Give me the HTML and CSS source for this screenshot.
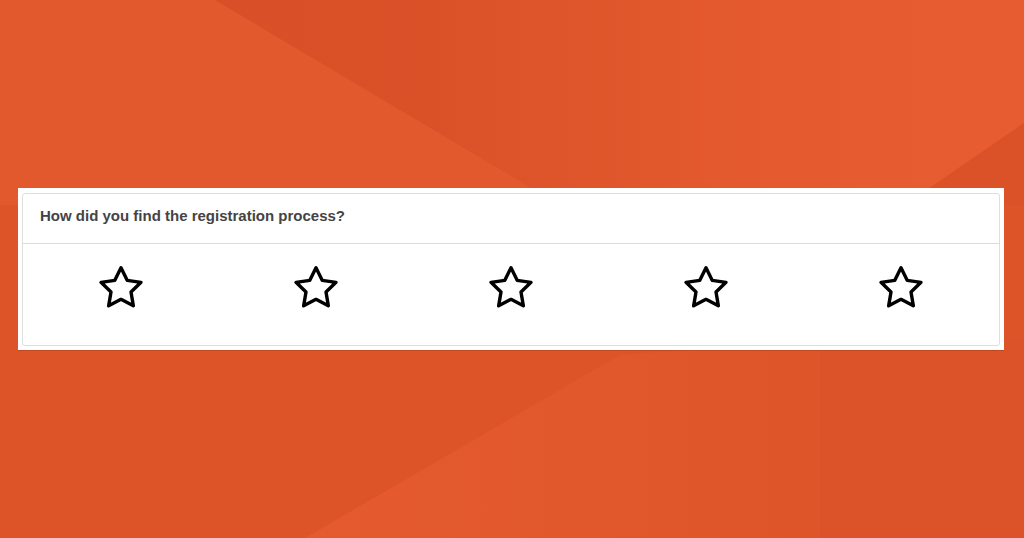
FILE: index.html
```html
<!DOCTYPE html>
<html lang="en">
<head>
<meta charset="utf-8">
<title>Rating</title>
<link rel="stylesheet" href="styles.css">
</head>
<body>
<div class="backdrop" aria-hidden="true">
  <svg viewBox="0 0 1024 538" preserveAspectRatio="none" width="1024" height="538">
    <defs>
      <linearGradient id="topDark" x1="215" y1="0" x2="1024" y2="0" gradientUnits="userSpaceOnUse">
        <stop offset="0" stop-color="#d94f27"/>
        <stop offset="0.25" stop-color="#da5128"/>
        <stop offset="0.55" stop-color="#e2582d"/>
        <stop offset="0.8" stop-color="#e75b30"/>
        <stop offset="1" stop-color="#e85c31"/>
      </linearGradient>
      <linearGradient id="botLight" x1="300" y1="0" x2="800" y2="0" gradientUnits="userSpaceOnUse">
        <stop offset="0" stop-color="#e55a2f"/>
        <stop offset="0.6" stop-color="#e2582d"/>
        <stop offset="1" stop-color="#de552a"/>
      </linearGradient>
    </defs>
    <rect x="0" y="0" width="1024" height="538" fill="#dd5429"/>
    <polygon points="0,0 215,0 560,205 0,205" fill="#e3592e"/>
    <polygon points="215,0 1024,0 1024,123 905,205 560,205" fill="url(#topDark)"/>
    <polygon points="1024,123 1024,205 905,205" fill="#db5229"/>
    <polygon points="305,538 620,355 820,340 820,538" fill="url(#botLight)"/>
    <polygon points="820,340 1024,340 1024,538 820,538" fill="#dc5329"/>
  </svg>
</div>
<main class="page">
  <section class="frame">
    <div class="card">
      <header class="card-head">How did you find the registration process?</header>
      <div class="stars">
        <button class="star" type="button" aria-label="1 star"><svg viewBox="0 0 24 24" width="48" height="48"><path d="M12 2.4l3.09 6.26L22 9.67l-5 4.87 1.18 6.88L12 18.17l-6.18 3.25L7 14.54 2 9.67l6.91-1.01L12 2.4z"/></svg></button>
        <button class="star" type="button" aria-label="2 stars"><svg viewBox="0 0 24 24" width="48" height="48"><path d="M12 2.4l3.09 6.26L22 9.67l-5 4.87 1.18 6.88L12 18.17l-6.18 3.25L7 14.54 2 9.67l6.91-1.01L12 2.4z"/></svg></button>
        <button class="star" type="button" aria-label="3 stars"><svg viewBox="0 0 24 24" width="48" height="48"><path d="M12 2.4l3.09 6.26L22 9.67l-5 4.87 1.18 6.88L12 18.17l-6.18 3.25L7 14.54 2 9.67l6.91-1.01L12 2.4z"/></svg></button>
        <button class="star" type="button" aria-label="4 stars"><svg viewBox="0 0 24 24" width="48" height="48"><path d="M12 2.4l3.09 6.26L22 9.67l-5 4.87 1.18 6.88L12 18.17l-6.18 3.25L7 14.54 2 9.67l6.91-1.01L12 2.4z"/></svg></button>
        <button class="star" type="button" aria-label="5 stars"><svg viewBox="0 0 24 24" width="48" height="48"><path d="M12 2.4l3.09 6.26L22 9.67l-5 4.87 1.18 6.88L12 18.17l-6.18 3.25L7 14.54 2 9.67l6.91-1.01L12 2.4z"/></svg></button>
      </div>
    </div>
  </section>
</main>
</body>
</html>
```

FILE: styles.css
```css
* { box-sizing: border-box; }

html, body {
  margin: 0;
  padding: 0;
  width: 1024px;
  height: 538px;
  overflow: hidden;
}

body {
  background: #dd5429;
  font-family: "Liberation Sans", Arial, Helvetica, sans-serif;
}

.backdrop {
  position: fixed;
  inset: 0;
  z-index: 0;
}

.backdrop svg {
  display: block;
}

.page {
  position: relative;
  z-index: 1;
  padding: 188px 20px 0 18px;
}

.frame {
  width: 986px;
  background: #ffffff;
  padding: 5px 4px 4px 4px;
  box-shadow: 0 1px 0 rgba(120, 40, 10, 0.25);
}

.card {
  border: 1px solid #dedede;
  border-radius: 3px;
  background: #ffffff;
}

.card-head {
  height: 50px;
  padding: 13px 0 0 17px;
  font-size: 15px;
  line-height: 18px;
  font-weight: bold;
  color: #444444;
  border-bottom: 1px solid #dcdcdc;
}

.stars {
  display: grid;
  grid-template-columns: repeat(5, 1fr);
  height: 101px;
  padding-top: 19px;
}

.star {
  justify-self: center;
  align-self: start;
  width: 48px;
  height: 48px;
  padding: 0;
  border: 0;
  background: transparent;
  cursor: pointer;
}

.star svg {
  display: block;
  fill: none;
  stroke: #000000;
  stroke-width: 1.7;
  stroke-linejoin: round;
  stroke-linecap: round;
}
```
